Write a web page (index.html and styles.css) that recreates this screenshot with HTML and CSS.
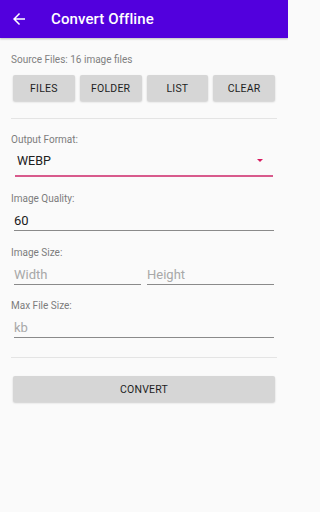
FILE: index.html
```html
<!DOCTYPE html>
<html>
<head>
<meta charset="utf-8">
<link rel="stylesheet" href="styles.css">
</head>
<body>
<header class="appbar">
  <svg class="back" width="18" height="18" viewBox="0 0 24 24"><path d="M20 11H7.83l5.59-5.59L12 4l-8 8 8 8 1.41-1.41L7.83 13H20v-2z" fill="#fff"/></svg>
  <span class="title">Convert Offline</span>
</header>
<main class="content">
  <div class="source">Source Files: 16 image files</div>
  <div class="btnrow">
    <div class="btn">FILES</div>
    <div class="btn">FOLDER</div>
    <div class="btn">LIST</div>
    <div class="btn">CLEAR</div>
  </div>
  <div class="divider first"></div>
  <div class="label">Output Format:</div>
  <div class="select">
    <span>WEBP</span>
    <span class="tri"></span>
  </div>
  <div class="label">Image Quality:</div>
  <div class="field value">60</div>
  <div class="label">Image Size:</div>
  <div class="pair">
    <div class="field ph">Width</div>
    <div class="field ph">Height</div>
  </div>
  <div class="label lastlabel">Max File Size:</div>
  <div class="field ph">kb</div>
  <div class="divider second"></div>
  <div class="btn wide">CONVERT</div>
</main>
</body>
</html>
```
FILE: styles.css
```css
* { box-sizing: border-box; }
html, body { margin: 0; padding: 0; background: #fafafa; }
body {
  width: 288px;
  height: 512px;
  font-family: Roboto, "Liberation Sans", sans-serif;
  overflow: hidden;
}
.appbar {
  height: 38px;
  background: #5200dd;
  display: flex;
  align-items: center;
  padding-left: 10px;
  box-shadow: 0 1px 2px rgba(0,0,0,0.25);
}
.back { display: block; margin-right: 23px; }
.title {
  color: #fff;
  font-size: 15px;
  font-weight: 500;
  letter-spacing: 0.1px;
}
.content {
  padding: 0 11px;
  display: flex;
  flex-direction: column;
}
.source {
  margin-top: 16px;
  font-size: 10px;
  color: #808080;
  line-height: 12px;
}
.btnrow {
  margin: 9px 2px 0;
  display: grid;
  grid-template-columns: repeat(4, 1fr);
  gap: 5px;
}
.btn {
  height: 26px;
  background: #d6d6d6;
  border-radius: 2px;
  box-shadow: 0 1px 2px rgba(0,0,0,0.18);
  display: flex;
  align-items: center;
  justify-content: center;
  font-size: 10.5px;
  color: #1e1e1e;
  letter-spacing: 0.2px;
}
.divider {
  height: 1px;
  background: #e4e4e4;
}
.divider.first { margin-top: 17px; }
.label {
  font-size: 10px;
  color: #7c7c7c;
  line-height: 12px;
}
.divider.first + .label { margin-top: 15px; }
.select {
  margin: 4px 4px 0;
  height: 27px;
  border-bottom: 2px solid #d85a8c;
  display: flex;
  align-items: center;
  justify-content: space-between;
  padding: 0 10px 4px 2px;
  font-size: 12.5px;
  color: #202020;
}
.tri {
  width: 0; height: 0;
  border-left: 3.5px solid transparent;
  border-right: 3.5px solid transparent;
  border-top: 3.5px solid #d81b60;
}
.select + .label { margin-top: 16px; }
.field {
  margin: 0 3px;
  height: 24px;
  border-bottom: 1px solid #8a8a8a;
  font-size: 13px;
  display: flex;
  align-items: center;
  padding: 3px 0 0 0;
}
.label + .field, .label + .pair { margin-top: 2px; }
.field.value { color: #1a1a1a; }
.field.ph { color: #a8a8a8; }
.field + .label { margin-top: 16px; }
.pair + .label { margin-top: 15px; }
.pair {
  display: grid;
  grid-template-columns: 1fr 1fr;
  gap: 6px;
  margin-left: 3px;
  margin-right: 3px;
}
.pair .field { margin: 0; }
.divider.second { margin-top: 19px; }
.btn.wide { margin: 18px 2px 0; }
```
